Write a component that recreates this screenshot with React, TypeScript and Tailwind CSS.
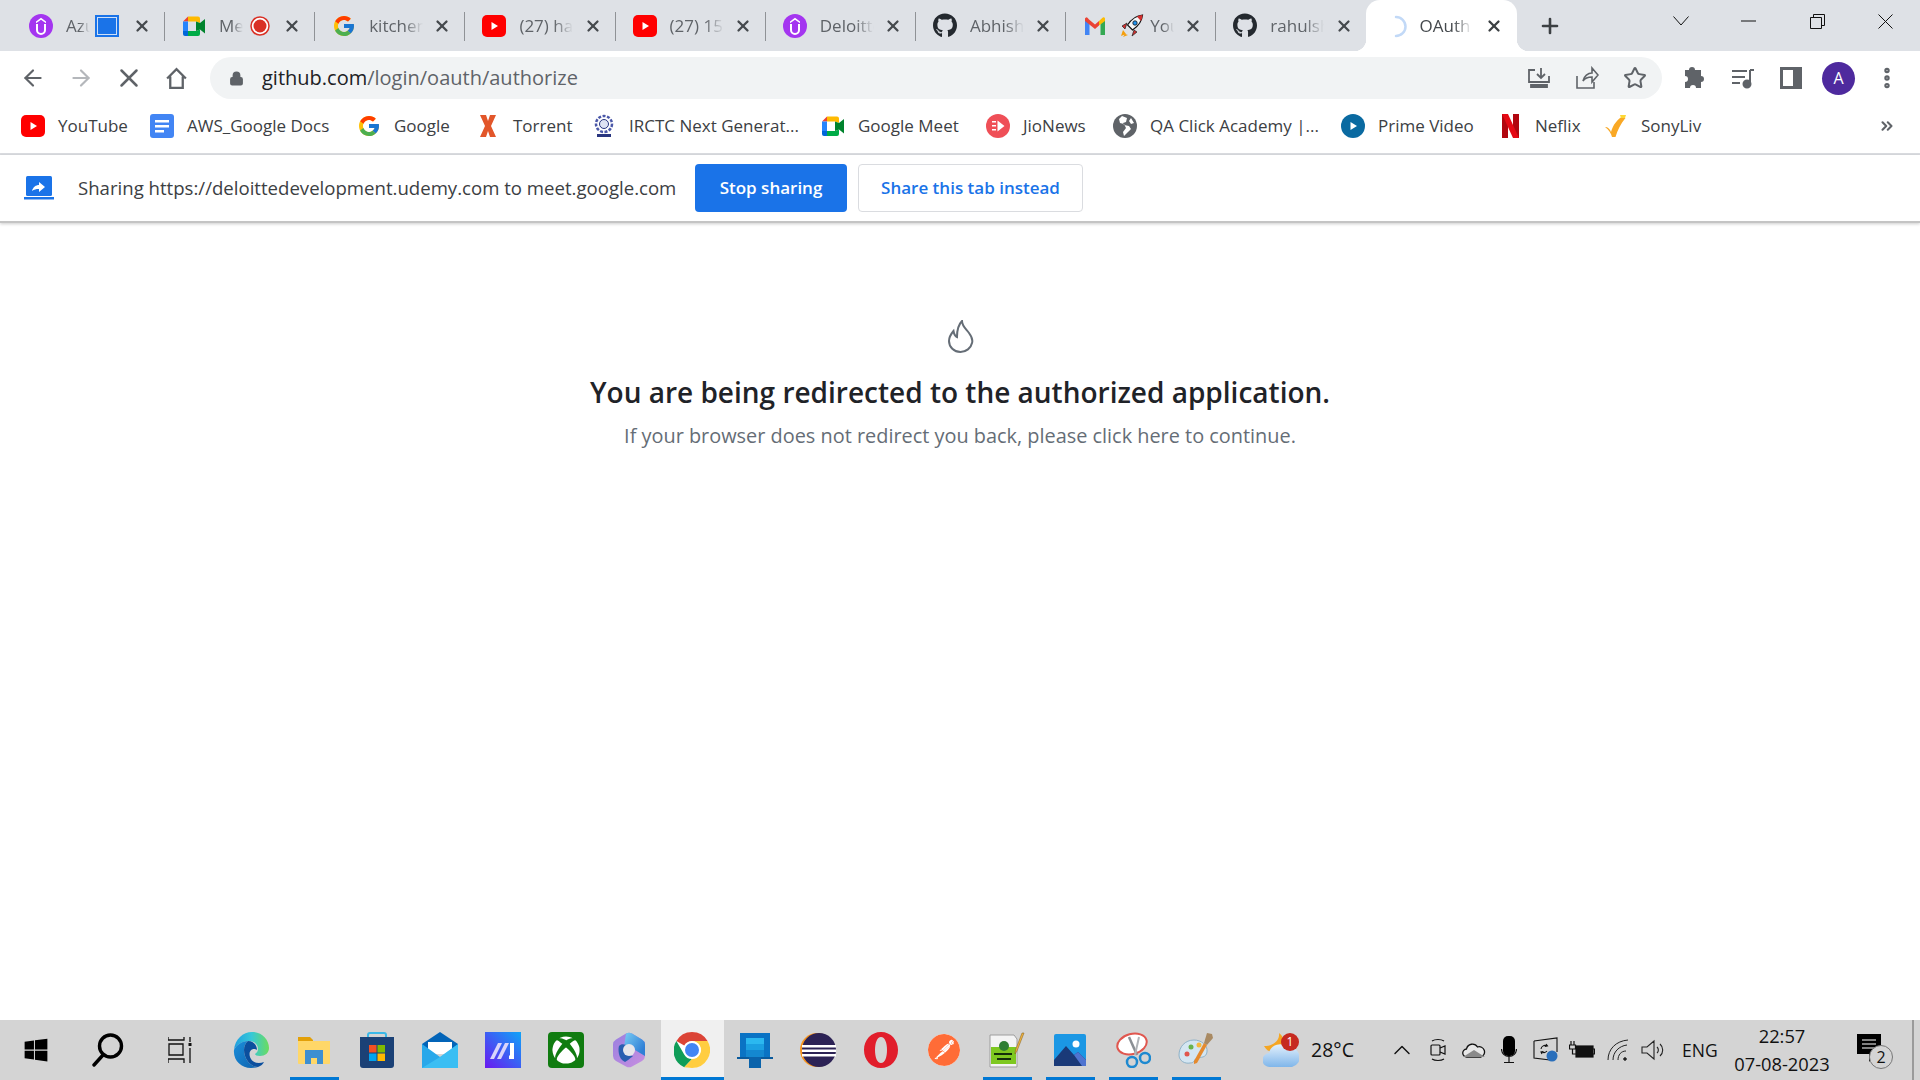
import type { ReactNode } from "react";
import { FcGoogle } from "react-icons/fc";
import { FaGithub, FaWindows, FaXbox } from "react-icons/fa";
import { SiPostman } from "react-icons/si";
import { ArrowLeft, ArrowRight, ChevronUp, ChevronsRight, EllipsisVertical, Lock, Plus, Star, X } from "lucide-react";

const ui = "font-['Open_Sans',sans-serif]";

function Udemy() {
  return (
    <svg viewBox="0 0 24 24" className="h-6 w-6">
      <circle cx="12" cy="12" r="12" fill="#a435f0" />
      <path d="M7 7.500 12 3.800l5 3.700v1.800L12 5.800 7 9.300z" fill="#fff" />
      <path d="M8 10v6a4 4 0 0 0 8 0v-6" fill="none" stroke="#fff" strokeWidth="2" />
    </svg>
  );
}

function YouTube() {
  return (
    <svg viewBox="0 0 24 24" className="h-6 w-6">
      <rect y="1" width="24" height="22" rx="5" fill="#f00" />
      <path d="M9.500 8v8l6.500-4z" fill="#fff" />
    </svg>
  );
}

function Meet() {
  return (
    <svg viewBox="0 0 24 24" className="h-6 w-6">
      <path d="M6 2.500 1 7.500h5z" fill="#ea4335" />
      <path d="M1 7.500v9.500h5V7.500z" fill="#2684fc" />
      <path d="M1 17v3a2 2 0 0 0 2 2h3v-5z" fill="#0066da" />
      <path d="M6 2.500h10a2 2 0 0 1 2 2V9l-4-1.500H6z" fill="#ffba00" />
      <path d="M6 22h10a2 2 0 0 0 2-2v-4.500L14 17H6z" fill="#00ac47" />
      <path d="m14 7.500 4 1.500 5-4v14.500L18 15.500 14 17z" fill="#00832d" />
    </svg>
  );
}

function Gmail() {
  return (
    <svg viewBox="0 0 24 24" className="h-6 w-6">
      <path d="M2 6v15h4.500V9.500z" fill="#4285f4" />
      <path d="M22 6v15h-4.500V9.500z" fill="#34a853" />
      <path d="M2 4.500V7l10 8 4-3.500V7L12 10.500 6 5.500 4.500 3.800A1.500 1.500 0 0 0 2 4.500z" fill="#ea4335" />
      <path d="M16 7v4.500l6-4.500V4.500a1.500 1.500 0 0 0-2.500-.800z" fill="#fbbc04" />
    </svg>
  );
}

function Rocket() {
  return (
    <svg viewBox="0 0 24 24" className="h-7 w-6">
      <path d="M3 16 1 22l5-2zM5 20l-2 3 5-2z" fill="#f59e0b" />
      <path d="M7 9 2 12l3 3zM14 16l-2 6 5-4z" fill="#d32f2f" stroke="#222" strokeWidth=".7" />
      <path d="M22.500 1c-6 .500-11 4-15 10l5 5c6-4 9.500-9 10-15z" fill="#f5f7f8" stroke="#111" strokeWidth="1.200" />
      <path d="M22.500 1c-2 .200-4 .800-5.500 1.700L21 7c.900-1.800 1.400-3.800 1.500-6z" fill="#d32f2f" />
      <circle cx="15" cy="9" r="2.200" fill="#2196f3" stroke="#111" strokeWidth=".8" />
    </svg>
  );
}

function Spinner() {
  return (
    <svg viewBox="0 0 24 24" className="h-6 w-6">
      <path d="M10 3a9.500 9.500 0 0 1 0 19" fill="none" stroke="#c2d9f7" strokeWidth="2.500" strokeLinecap="round" />
    </svg>
  );
}

function ScreenTile() {
  return (
    <svg viewBox="0 0 24 22" className="h-[22px] w-6">
      <rect width="24" height="22" fill="#1a73e8" />
      <rect x="2.500" y="2.500" width="19" height="17" fill="none" stroke="#cfe0f8" strokeWidth="1" />
    </svg>
  );
}

function RecordDot() {
  return (
    <svg viewBox="0 0 20 20" className="h-5 w-5">
      <circle cx="10" cy="10" r="9" fill="#fff" stroke="#d93025" strokeWidth="1.500" />
      <circle cx="10" cy="10" r="6.500" fill="#d93025" />
    </svg>
  );
}

const tabs: { icon: ReactNode; title: string; extra?: ReactNode; first?: boolean; iconFirst?: boolean }[] = [
  { icon: <Udemy />, title: "Azure", extra: <ScreenTile />, first: true },
  { icon: <Meet />, title: "Meet", extra: <RecordDot /> },
  { icon: <FcGoogle size={24} />, title: "kitchen sink" },
  { icon: <YouTube />, title: "(27) hands on" },
  { icon: <YouTube />, title: "(27) 15 hands" },
  { icon: <Udemy />, title: "Deloitte" },
  { icon: <FaGithub size={25} color="#24292f" />, title: "Abhishek" },
  { icon: <Gmail />, title: "You have", extra: <Rocket />, iconFirst: true },
  { icon: <FaGithub size={25} color="#24292f" />, title: "rahulshetty" },
];

function Tab({ icon, title, extra, first, iconFirst }: (typeof tabs)[number]) {
  return (
    <div className={`relative flex h-full shrink-0 items-center pl-[18px] ${first ? "w-[153px]" : "w-[150.2px]"}`}>
      {!first && <div className="absolute left-0 top-3 h-[29px] w-px bg-[#8f9296]" />}
      <div className="flex w-6 shrink-0 items-center justify-center">{icon}</div>
      {iconFirst && <div className="ml-[13px] flex w-6 shrink-0 items-center justify-center">{extra}</div>}
      <span
        className={`overflow-hidden whitespace-nowrap text-[17px] text-[#5f6368] shrink-0 ${
          iconFirst ? "ml-[6px] w-[24px] [mask-image:linear-gradient(to_right,black_55%,transparent)]" : extra ? "ml-[13px] w-[24px] [mask-image:linear-gradient(to_right,black_55%,transparent)]" : "ml-[13px] w-[54px] [mask-image:linear-gradient(to_right,black_65%,transparent)]"
        }`}
      >
        {title}
      </span>
      {extra && !iconFirst && <div className="ml-[4px] flex w-[26px] items-center justify-center">{extra}</div>}
      <X size={18} strokeWidth={3} className="absolute right-[13px] top-[17px] text-[#45494d]" />
    </div>
  );
}

function BookmarkIcon({ name }: { name: string }) {
  if (name === "yt") return <YouTube />;
  if (name === "docs")
    return (
      <svg viewBox="0 0 24 24" className="h-6 w-6">
        <rect x="0" y="0" width="24" height="24" rx="3" fill="#4285f4" />
        <path d="M5 6h14v2.500H5zM5 11h14v2.500H5zM5 16h9v2.500H5z" fill="#fff" />
      </svg>
    );
  if (name === "g") return <FcGoogle size={24} />;
  if (name === "torrent")
    return (
      <svg viewBox="0 0 24 24" className="h-6 w-6">
        <path d="M4 1h6l2 6 2-6h6l-5 11 5 11h-6l-2-6-2 6H4l5-11z" fill="#e2562a" />
      </svg>
    );
  if (name === "irctc")
    return (
      <svg viewBox="0 0 24 24" className="h-6 w-6">
        <circle cx="12" cy="10" r="8" fill="none" stroke="#4a57a8" strokeWidth="2.500" strokeDasharray="3 1.500" />
        <circle cx="12" cy="10" r="4.500" fill="#dfe3f3" stroke="#28357f" strokeWidth="1" />
        <rect x="5" y="20" width="14" height="3" fill="#28357f" />
      </svg>
    );
  if (name === "meet") return <Meet />;
  if (name === "jio")
    return (
      <svg viewBox="0 0 24 24" className="h-6 w-6">
        <circle cx="12" cy="12" r="12" fill="#ef4f57" />
        <path d="M6 7h4v1.500H6zM6 11h4v1.500H6zM6 15h4v1.500H6zM11.500 6.500l7 5.500-7 5.500z" fill="#fff" />
      </svg>
    );
  if (name === "qa")
    return (
      <svg viewBox="0 0 24 24" className="h-6 w-6">
        <circle cx="12" cy="12" r="12" fill="#5f6368" />
        <path d="M9 2 6 5l1 4 4 1 2 4-3 4 1 4 4-4 3-3-2-3-5-1-1-2 3-1 1-4zM18 4l3 5-3 1-2-3z" fill="#fff" />
      </svg>
    );
  if (name === "prime")
    return (
      <svg viewBox="0 0 24 24" className="h-6 w-6">
        <circle cx="12" cy="12" r="12" fill="#0a6aa1" />
        <path d="M9.500 8v8l6.500-4z" fill="#fff" />
      </svg>
    );
  if (name === "netflix")
    return (
      <svg viewBox="0 0 24 24" className="h-6 w-6">
        <path d="M4 0h6v24H4z" fill="#b1060f" />
        <path d="M15 0h6v24h-6z" fill="#b1060f" />
        <path d="M4 0h6l11 24h-6z" fill="#e50914" />
      </svg>
    );
  return (
    <svg viewBox="0 0 24 24" className="h-6 w-6">
      <path d="M1 13c3 0 5 2 6 5 2-7 6-13 14-17-1 1.500-.500 3 .500 3-5 6-8 12-10 19H8c-1-4-3-7-7-10z" fill="#f9a825" />
      <path d="M16 1h6l-1 3h-4z" fill="#fdd835" />
    </svg>
  );
}

const bookmarks = [
  { icon: "yt", label: "YouTube", w: "w-[92px]" },
  { icon: "docs", label: "AWS_Google Docs", w: "w-[170px]" },
  { icon: "g", label: "Google", w: "w-[82px]" },
  { icon: "torrent", label: "Torrent", w: "w-[79px]" },
  { icon: "irctc", label: "IRCTC Next Generat...", w: "w-[192px]" },
  { icon: "meet", label: "Google Meet", w: "w-[128px]" },
  { icon: "jio", label: "JioNews", w: "w-[90px]" },
  { icon: "qa", label: "QA Click Academy |...", w: "w-[191px]" },
  { icon: "prime", label: "Prime Video", w: "w-[120px]" },
  { icon: "netflix", label: "Neflix", w: "w-[69px]" },
  { icon: "sony", label: "SonyLiv", w: "w-[70px]" },
];

function Chrome() {
  return (
    <svg viewBox="0 0 36 36" className="h-9 w-9">
      <circle cx="18" cy="18" r="18" fill="#fff" />
      <path d="M18 0a18 18 0 0 1 15.600 9H18a9 9 0 0 0-7.800 4.500L2.400 9A18 18 0 0 1 18 0z" fill="#db4437" />
      <path d="M2.400 9l7.800 13.500a9 9 0 0 0 7.800 4.500L10.200 35.200A18 18 0 0 1 2.400 9z" fill="#0f9d58" />
      <path d="M33.600 9A18 18 0 0 1 18 36l-7.800-.800L18 27a9 9 0 0 0 7.800-4.500A9 9 0 0 0 18 9z" fill="#ffcd40" />
      <circle cx="18" cy="18" r="8.500" fill="#fff" />
      <circle cx="18" cy="18" r="7" fill="#4285f4" />
    </svg>
  );
}

function Edge() {
  return (
    <svg viewBox="0 0 36 36" className="h-9 w-9">
      <defs>
        <linearGradient id="edge-a" x1="0" y1="0.500" x2="1" y2="0.500">
          <stop offset="0" stopColor="#1f9fe0" />
          <stop offset="0.500" stopColor="#37c8d8" />
          <stop offset="1" stopColor="#6bdc5e" />
        </linearGradient>
        <linearGradient id="edge-b" x1="0" y1="0" x2="1" y2="1">
          <stop offset="0" stopColor="#1a8fdb" />
          <stop offset="1" stopColor="#0f62ae" />
        </linearGradient>
      </defs>
      <path d="M1 18C2 7 10 0 19 0c10 0 17 8 17 16 0 5-4 8-9 8-3 0-5-1-5-2 1-1 3-2 3-5 0-5-4-8-9-8C9 9 3 13 1 18z" fill="url(#edge-a)" />
      <path d="M1 18C3 13 9 9 15 9c-4 3-5 9-3 15 2 6 7 11 13 11-2 .700-4 1-7 1C8 36 0 28 1 18z" fill="url(#edge-b)" />
      <path d="M15 9c-4 3-5 9-3 15 2 6 7 11 13 11 3-1 5-3 6-5-5 2-11 1-13-3-3-5-1-10 3-10 1 0 2 0 3 1 0-5-4-9-9-9z" fill="#0b4f9e" />
    </svg>
  );
}

const taskApps: { icon: ReactNode; active?: boolean; hovered?: boolean }[] = [
  { icon: <Edge /> },
  {
    active: true,
    icon: (
      <svg viewBox="0 0 32 32" className="h-8 w-8">
        <path d="M0 3h12l3 3v5H0z" fill="#e3a008" />
        <path d="M0 7h32v22a1 1 0 0 1-1 1H1a1 1 0 0 1-1-1z" fill="#ffd768" />
        <path d="M7 30V16h18v14h-6v-6h-6v6z" fill="#3d8fd1" />
      </svg>
    ),
  },
  {
    icon: (
      <svg viewBox="0 0 36 36" className="h-9 w-9">
        <path d="M9 6V3a2 2 0 0 1 2-2h14a2 2 0 0 1 2 2v3" fill="none" stroke="#3ab8e8" strokeWidth="2" />
        <path d="M1 5h34v28a3 3 0 0 1-3 3H4a3 3 0 0 1-3-3z" fill="#1b4176" />
        <path d="M10 13h7.500v7.500H10z" fill="#f25022" />
        <path d="M18.500 13H26v7.500h-7.500z" fill="#7fba00" />
        <path d="M10 21.500h7.500V29H10z" fill="#00a4ef" />
        <path d="M18.500 21.500H26V29h-7.500z" fill="#ffb900" />
      </svg>
    ),
  },
  {
    icon: (
      <svg viewBox="0 0 36 36" className="h-9 w-9">
        <path d="M0 12 18 0l18 12v5H0z" fill="#0364b8" />
        <path d="M6 10h24v12H6z" fill="#fff" />
        <path d="M0 12l18 13 18-13v24H0z" fill="#28a8ea" />
        <path d="M36 36H0L18 25l18-13z" fill="#50d9ff" opacity=".45" />
      </svg>
    ),
  },
  {
    icon: (
      <svg viewBox="0 0 36 36" className="h-9 w-9">
        <defs>
          <linearGradient id="ma-a" x1="0" y1="1" x2="1" y2="0">
            <stop offset="0" stopColor="#6a18f0" />
            <stop offset="1" stopColor="#0fa4f8" />
          </linearGradient>
        </defs>
        <rect width="36" height="36" fill="url(#ma-a)" />
        <path d="M5 27 13 11h4L9 27zM12 27l8-16h4l-8 16z" fill="#d9d4fb" />
        <path d="M25 11h4v16h-5v-3l1-1z" fill="#fff" />
      </svg>
    ),
  },
  {
    icon: (
      <svg viewBox="0 0 36 36" className="h-9 w-9">
        <rect width="36" height="36" rx="4" fill="#107c10" />
        <foreignObject x="4" y="4" width="28" height="28">
          <FaXbox size={28} color="#fff" />
        </foreignObject>
      </svg>
    ),
  },
  {
    icon: (
      <svg viewBox="0 0 36 36" className="h-9 w-9">
        <defs>
          <linearGradient id="cp-a" x1="0.200" y1="0" x2="1" y2="0.600">
            <stop offset="0" stopColor="#6fc3f0" />
            <stop offset="1" stopColor="#2f7fd6" />
          </linearGradient>
          <linearGradient id="cp-b" x1="0" y1="0" x2="1" y2="1">
            <stop offset="0" stopColor="#9a7fe0" />
            <stop offset="1" stopColor="#c78fe0" />
          </linearGradient>
        </defs>
        <path d="M15 1.500a6 6 0 0 1 6 0l10 6a6 6 0 0 1 3 5V24a6 6 0 0 1-3 5l-10 5.500a6 6 0 0 1-6 0L5 29a6 6 0 0 1-3-5V12.500a6 6 0 0 1 3-5z" fill="url(#cp-b)" />
        <path d="M15 1.500a6 6 0 0 1 6 0l10 6a6 6 0 0 1 3 5V24l-10-6a6 6 0 0 0-6-5 6 6 0 0 0-5 2z" fill="url(#cp-a)" />
        <path d="M8 14c-1 3-1 13 6 16 2-1 7-5 8-6-4 0-8-3-8-7 0-1 0-2 1-4-3-1-5-1-7 1z" fill="#2a5fb0" />
        <circle cx="18" cy="18" r="6" fill="#e6e6ea" />
      </svg>
    ),
  },
  { icon: <Chrome />, hovered: true },
  {
    icon: (
      <svg viewBox="0 0 36 36" className="h-9 w-9">
        <path d="M3 1h30v26H3z" fill="#0a73c4" />
        <path d="M0 25h36v2H0z" fill="#0a5a9c" />
        <path d="M9 6h18v6H9z" fill="#2bb8f0" />
        <path d="M9 12h18v6H9z" fill="#1ba0e2" />
        <path d="M9 18h18v7H9z" fill="#1488d0" />
        <path d="M12 25h12v11H12z" fill="#0a63ab" />
      </svg>
    ),
  },
  {
    icon: (
      <svg viewBox="0 0 36 36" className="h-9 w-9">
        <circle cx="17" cy="18" r="17" fill="#f7941e" />
        <circle cx="19" cy="18" r="17" fill="#2c2255" />
        <path d="M2 13h34v2.500H2zM2 17.500h34V20H2zM2 22h34v2.500H2z" fill="#fff" />
      </svg>
    ),
  },
  {
    icon: (
      <svg viewBox="0 0 36 36" className="h-9 w-9">
        <path fillRule="evenodd" d="M18 0c10 0 17 8 17 18s-7 18-17 18S1 28 1 18 8 0 18 0zm0 5c-4 0-6 6-6 13s2 13 6 13 6-6 6-13-2-13-6-13z" fill="#e11d2b" />
      </svg>
    ),
  },
  {
    icon: (
      <div className="flex h-8 w-8 items-center justify-center rounded-full bg-[#ff6c37]">
        <SiPostman size={32} color="#ff6c37" className="rounded-full bg-white p-0" />
      </div>
    ),
  },
  {
    active: true,
    icon: (
      <svg viewBox="0 0 36 36" className="h-9 w-9">
        <path d="M1 3h24l3 4v28H1z" fill="#f4f4f4" stroke="#9e9e9e" />
        <path d="M2 15h25v17H2z" fill="#7ec820" />
        <circle cx="15" cy="14" r="5" fill="#2e7d32" />
        <path d="M5 22h18M8 27h14" stroke="#14300a" strokeWidth="2" />
        <path d="M35 1l-7 18-2 3 .500-4L33 1z" fill="#f2b33d" stroke="#7a5a1c" strokeWidth=".5" />
      </svg>
    ),
  },
  {
    active: true,
    icon: (
      <svg viewBox="0 0 32 32" className="h-8 w-8">
        <path d="M0 2a2 2 0 0 1 2-2h28a2 2 0 0 1 2 2v28a2 2 0 0 1-2 2H2a2 2 0 0 1-2-2z" fill="#1b97e4" />
        <circle cx="22" cy="10" r="3.500" fill="#fff" />
        <path d="M0 32V26L12 12l8 9 4-3 8 8v6z" fill="#1a3a78" />
        <path d="M20 21l4-3 8 8v6H28z" fill="#4f74d0" />
      </svg>
    ),
  },
  {
    active: true,
    icon: (
      <svg viewBox="0 0 36 36" className="h-9 w-9">
        <ellipse cx="17" cy="12" rx="15" ry="10" fill="#fff" stroke="#e0574f" strokeWidth="2" transform="rotate(-15 17 12)" />
        <path d="M14 5l8 18" stroke="#8a8f94" strokeWidth="2.500" />
        <path d="M24 5l-4 18" stroke="#b0b4b8" strokeWidth="2" />
        <circle cx="17" cy="30" r="5" fill="none" stroke="#1d89d0" strokeWidth="2.500" />
        <circle cx="30" cy="26" r="5" fill="none" stroke="#1d89d0" strokeWidth="2.500" />
      </svg>
    ),
  },
  {
    active: true,
    icon: (
      <svg viewBox="0 0 36 36" className="h-9 w-9">
        <path d="M16 8C7 8 1 15 1 23c0 6 6 9 11 8 5 0 4-4 7-5 4-1 9 0 10-6 1-7-6-12-13-12z" fill="#d4e6f2" stroke="#8fb2c8" />
        <circle cx="9" cy="22" r="2.500" fill="#e0574f" />
        <circle cx="13" cy="15" r="2.500" fill="#69b34c" />
        <circle cx="21" cy="13" r="2.500" fill="#f5b83d" />
        <path d="M16 32l3-1 10-18-3-2-10 18z" fill="#e58a2e" />
        <path d="M26 11l3-10 5 1 1 4-6 7z" fill="#a98a63" />
      </svg>
    ),
  },
];

function Tray() {
  return (
    <div className="flex h-full shrink-0 items-center">
      <div className="relative flex h-full w-[44px] items-center justify-center">
        <svg viewBox="0 0 36 36" className="h-9 w-9">
          <defs>
            <linearGradient id="cloud-a" x1="0" y1="0" x2="0" y2="1">
              <stop offset="0" stopColor="#e3f0fc" />
              <stop offset="1" stopColor="#7fb6ea" />
            </linearGradient>
          </defs>
          <path d="M16 1c1 7-5 13-15 13 3 6 10 8 15 4 6-5 6-13 0-17z" fill="#f5a623" />
          <path d="M7 35a7 7 0 0 1-1-14 11 11 0 0 1 19-5 9.500 9.500 0 0 1 4 19z" fill="url(#cloud-a)" />
        </svg>
        <span className={`absolute right-[4px] top-[13px] flex h-[18px] w-[18px] items-center justify-center rounded-full bg-[#c62a20] text-[12px] text-white ${ui}`}>1</span>
      </div>
      <span className="ml-[8px] w-[77px] text-[19.500px] text-[#111]">28°C</span>
      <ChevronUp size={28} strokeWidth={1.25} className="text-[#111]" />
      <svg viewBox="0 0 20 24" className="ml-[12px] h-6 w-5 text-[#111]" fill="none" stroke="currentColor" strokeWidth="1.200">
        <rect x="3" y="7" width="9" height="10" rx="1" />
        <path d="M12 10l5-2v8l-5-2M4 3c3-2 9-2 12 0M4 21c3 2 9 2 12 0" />
      </svg>
      <svg viewBox="0 0 24 16" className="ml-[14px] h-4 w-6" fill="none" stroke="#111" strokeWidth="1.300">
        <path d="M5 15a4 4 0 0 1-.500-8 6 6 0 0 1 11-2 5 5 0 0 1 3.500 10z" fill="#e8e8e8" />
        <path d="M1 15 12 8l11 7z" fill="#8a8a8a" stroke="none" />
      </svg>
      <svg viewBox="0 0 16 28" className="ml-[15px] h-7 w-4">
        <rect x="2" y="0" width="12" height="20" rx="5" fill="#000" />
        <path d="M0.500 13a7.500 7.500 0 0 0 15 0M8 21v5M3 26.500h10" stroke="#111" fill="none" strokeWidth="1.200" />
      </svg>
      <svg viewBox="0 0 26 26" className="ml-[16px] h-[26px] w-[26px]" fill="none" stroke="#111" strokeWidth="1.100">
        <path d="M1 4l23-3v14M17 23 1 21V4" />
        <path d="M8 12a4 4 0 0 1 6-3M13 7l1.500 2-2.500.500M14 14a4 4 0 0 1-5 1M9 17l-1-2 2.500-.500" />
        <circle cx="19" cy="19" r="5.500" fill="#2a6fbb" stroke="none" />
      </svg>
      <svg viewBox="0 0 26 18" className="ml-[10px] h-[18px] w-[26px]" fill="none" stroke="#111" strokeWidth="1.200">
        <rect x="7" y="5" width="17" height="11" fill="#111" />
        <path d="M24 8h1.500v5H24M2 0v4M5 0v4M0.500 4h6v4h-6zM3.500 8v5H7" />
      </svg>
      <svg viewBox="0 0 22 22" className="ml-[12px] h-[22px] w-[22px]" fill="none" stroke="#222" strokeWidth="1">
        <path d="M1 21C1 10 9 2 21 1M6 21c0-8 6-14 14-15M11 21c0-5 3-9 8-9" />
        <circle cx="18" cy="20" r="1.300" fill="#222" />
      </svg>
      <svg viewBox="0 0 24 24" className="ml-[12px] h-6 w-6" fill="none" stroke="#222" strokeWidth="1.100">
        <path d="M1 9h5l7-6v18l-7-6H1zM16 9a4 4 0 0 1 0 6M19 6a8 8 0 0 1 0 12" />
      </svg>
      <span className="ml-[17px] w-[50px] text-[17.500px] text-[#111]">ENG</span>
      <div className="flex w-[100px] flex-col items-center text-[18.300px] leading-[28px] text-[#111]">
        <span>22:57</span>
        <span className="whitespace-nowrap">07-08-2023</span>
      </div>
      <div className="relative ml-[25px] mr-[29px] h-[32px] w-[26px]">
        <svg viewBox="0 0 26 30" className="h-[30px] w-[26px]">
          <path d="M0 0h24v20h-6l-6 8v-8H0z" fill="#000" />
          <path d="M5 6h14M5 10h14M5 14h14" stroke="#fff" strokeWidth="1.200" />
        </svg>
        <span className="absolute left-[12px] top-[11px] flex h-[24px] w-[24px] items-center justify-center rounded-full border border-[#777] bg-[#d4d4d4] text-[16px] text-[#111]">2</span>
      </div>
      <div className="h-full w-[2px] bg-[#9a9a9a]" />
      <div className="w-[6px]" />
    </div>
  );
}

export default function App() {
  return (
    <div className={`flex h-[1080px] w-[1920px] flex-col overflow-hidden bg-white ${ui}`}>
      {/* tab strip */}
      <div className="flex h-[51px] shrink-0 bg-[#dee1e6] pl-[11px]">
        {tabs.map((t) => (
          <Tab key={t.title} {...t} />
        ))}
        <div className="relative flex h-full w-[151px] shrink-0 items-center rounded-t-[14px] bg-white pl-[20px]">
          <div className="absolute -left-3 bottom-0 h-3 w-3 bg-[radial-gradient(circle_at_0_0,transparent_12px,white_12.500px)]" />
          <div className="absolute -right-3 bottom-0 h-3 w-3 bg-[radial-gradient(circle_at_100%_0,transparent_12px,white_12.500px)]" />
          <Spinner />
          <span className="ml-[10px] w-[52px] overflow-hidden whitespace-nowrap text-[17px] text-[#45494d] [mask-image:linear-gradient(to_right,black_65%,transparent)]">OAuth</span>
          <X size={18} strokeWidth={3} className="absolute right-[14px] top-[17px] text-[#3c4043]" />
        </div>
        <Plus size={24} strokeWidth={2.6} className="ml-[21px] mt-[14px] shrink-0 text-[#3c4043]" />
        <div className="ml-auto flex h-[42px] items-center pr-[27px] text-[#111]">
          <svg viewBox="0 0 16 10" className="h-[10px] w-4" fill="none" stroke="currentColor"><path d="M.5.500 8 9 15.500.500" /></svg>
          <svg viewBox="0 0 15 2" className="ml-[52px] h-[2px] w-[15px]"><path d="M0 1h15" stroke="currentColor" /></svg>
          <svg viewBox="0 0 15 15" className="ml-[54px] h-[15px] w-[15px]" fill="none" stroke="currentColor"><path d="M.5 3.500h11v11H.5zM3.500 3.500v-3h11v11h-3" /></svg>
          <svg viewBox="0 0 15 15" className="ml-[53px] h-[15px] w-[15px]" fill="none" stroke="currentColor"><path d="M.5.500l14 14M14.500.500l-14 14" /></svg>
        </div>
      </div>

      {/* toolbar */}
      <div className="flex h-[54px] shrink-0 items-center text-[#5f6368]">
        <ArrowLeft size={26} strokeWidth={2} className="ml-[20px]" />
        <ArrowRight size={26} strokeWidth={2} className="ml-[22px] text-[#b4b7bb]" />
        <X size={30} strokeWidth={2} className="ml-[20px]" />
        <svg viewBox="0 0 24 24" className="ml-[20px] h-[25px] w-[25px]" fill="none" stroke="currentColor" strokeWidth="2.200">
          <path d="M3 12 12 3l9 9M6 10v11h12V10" />
        </svg>
        <div className="ml-[21px] flex h-[42px] w-[1452px] items-center rounded-full bg-[#f1f3f4] pl-[19px]">
          <Lock size={15} fill="currentColor" strokeWidth={2.500} />
          <span className="ml-[18px] text-[20px]">
            <span className="text-[#202124]">github.com</span>/login/oauth/authorize
          </span>
          <div className="ml-auto flex items-center pr-[15px]">
            <svg viewBox="0 0 24 24" className="h-6 w-6" fill="none" stroke="currentColor" strokeWidth="1.800">
              <path d="M8 4H2v12h20V10M14 2v10M10 8l4 4 4-4M5 20h14" />
              <path d="M4 19h16v2H4z" fill="currentColor" />
            </svg>
            <svg viewBox="0 0 24 24" className="ml-[24px] h-6 w-6" fill="none" stroke="currentColor" strokeWidth="1.600">
              <path d="M2 10v12h17v-6M8 15c1-5 5-8 9-8V2l6 7-6 7v-5c-4 0-7 1-9 4z" />
            </svg>
            <Star size={24} strokeWidth={2} className="ml-[24px]" />
          </div>
        </div>
        <svg viewBox="0 0 24 24" className="ml-[21px] h-6 w-6" fill="currentColor">
          <path d="M9 1a3 3 0 0 1 3 3h6v6a3 3 0 1 1 0 6v6h-5a3 3 0 1 0-6 0H2v-6a3 3 0 1 0 0-6V4h4a3 3 0 0 1 3-3z" />
        </svg>
        <svg viewBox="0 0 24 24" className="ml-[24px] h-6 w-6" fill="none" stroke="currentColor" strokeWidth="2">
          <path d="M1 5h15M1 11h13M1 17h8M19 4v14" />
          <circle cx="16" cy="18" r="3.500" fill="currentColor" />
          <path d="M19 4h4" />
        </svg>
        <svg viewBox="0 0 22 22" className="ml-[25px] h-[22px] w-[22px]">
          <path fillRule="evenodd" d="M0 0h22v22H0zM3 3v16h10V3z" fill="currentColor" />
        </svg>
        <div className="ml-[20px] flex h-[33px] w-[33px] items-center justify-center rounded-full bg-[#4e2a9e] text-[16px] text-white">A</div>
        <EllipsisVertical size={26} strokeWidth={3} className="ml-[19px]" />
      </div>

      {/* bookmarks bar */}
      <div className="flex h-[50px] shrink-0 items-center border-b-2 border-[#dadce0] pb-[7px] pl-[21px] text-[17px] text-[#3c4043]">
        {bookmarks.map((b) => (
          <div key={b.label} className="flex shrink-0 items-center">
            <div className="flex w-6 justify-center">
              <BookmarkIcon name={b.icon} />
            </div>
            <span className={`ml-[13px] whitespace-nowrap ${b.w}`}>{b.label}</span>
          </div>
        ))}
        <ChevronsRight size={18} strokeWidth={2.800} className="ml-auto mr-[24px] text-[#5f6368]" />
      </div>

      {/* screen share bar */}
      <div className="relative z-10 flex h-[68px] shrink-0 items-center border-b-2 border-[#c4c4c4] pl-[24px] shadow-[0_1px_3px_rgba(0,0,0,0.2)]">
        <svg viewBox="0 0 30 24" className="h-6 w-[30px]">
          <rect x="2" y="0" width="26" height="20" rx="1.500" fill="#1a73e8" />
          <path d="M0 21h30v2.500H0z" fill="#1a73e8" />
          <path d="M8 15c1-4 4-6 7-6V6l6 5-6 5v-3c-3 0-5 .500-7 2z" fill="#fff" />
        </svg>
        <span className="ml-[24px] w-[617px] whitespace-nowrap text-[18.600px] text-[#3c4043]">Sharing https://deloittedevelopment.udemy.com to meet.google.com</span>
        <button className="h-[48px] w-[152px] rounded-[4px] bg-[#1a73e8] text-[17px] font-semibold text-white">Stop sharing</button>
        <button className="ml-[11px] h-[48px] w-[225px] rounded-[4px] border border-[#dadce0] bg-white text-[17px] font-semibold text-[#1a73e8]">Share this tab instead</button>
      </div>

      {/* page */}
      <main className="flex min-h-0 flex-1 flex-col items-center bg-white pt-[97px]">
        <svg viewBox="0 0 27 33" className="h-[33px] w-[27px]" fill="none" stroke="#656d76" strokeWidth="2">
          <path d="M15 1c0 5 4 8 7 12 3 4 4 7 3 10-1 5-6 9-11.500 9C7 32 2 27 2 21c0-4 2-7 4.500-10 .500 3 1.500 5 3.500 6 0-6 1-12 5-16z" />
        </svg>
        <h1 className="mt-[19px] text-[28px] font-semibold leading-[40px] text-[#1f2328]">You are being redirected to the authorized application.</h1>
        <p className="mt-[8px] text-[19.900px] leading-[32px] text-[#656d76]">If your browser does not redirect you back, please click here to continue.</p>
      </main>

      {/* taskbar */}
      <div className="flex h-[60px] shrink-0 items-center bg-[#d4d4d4]">
        <div className="flex h-full w-[72px] items-center justify-center">
          <FaWindows size={26} color="#000" />
        </div>
        <div className="flex h-full w-[72px] items-center justify-center">
          <svg viewBox="0 0 32 34" className="h-[34px] w-8" fill="none" stroke="#000" strokeWidth="3.400">
            <circle cx="18.500" cy="13" r="11" />
            <path d="M11 22 2 32" strokeLinecap="round" />
          </svg>
        </div>
        <div className="flex h-full w-[72px] items-center justify-center">
          <svg viewBox="0 0 24 28" className="h-7 w-6" fill="none" stroke="#111" strokeWidth="1.300">
            <path d="M0 1v3h16V1M1 8h14v11H1zM0 27v-4h16v4M22 1v5M22 12v15" />
            <rect x="20.500" y="7" width="3" height="3" fill="#111" stroke="none" />
          </svg>
        </div>
        <div className="ml-[3.500px] flex h-full">
          {taskApps.map((a, i) => (
            <div key={i} className={`relative flex h-full w-[63px] items-center justify-center ${a.hovered ? "bg-[#f0f0f0]" : ""}`}>
              {a.icon}
              {a.active && <div className="absolute bottom-0 left-[7px] h-[3px] w-[49px] bg-[#0078d4]" />}
              {a.hovered && <div className="absolute inset-x-0 bottom-0 h-[3px] bg-[#0078d4]" />}
            </div>
          ))}
        </div>
        <div className="ml-auto h-full">
          <Tray />
        </div>
      </div>
    </div>
  );
}
